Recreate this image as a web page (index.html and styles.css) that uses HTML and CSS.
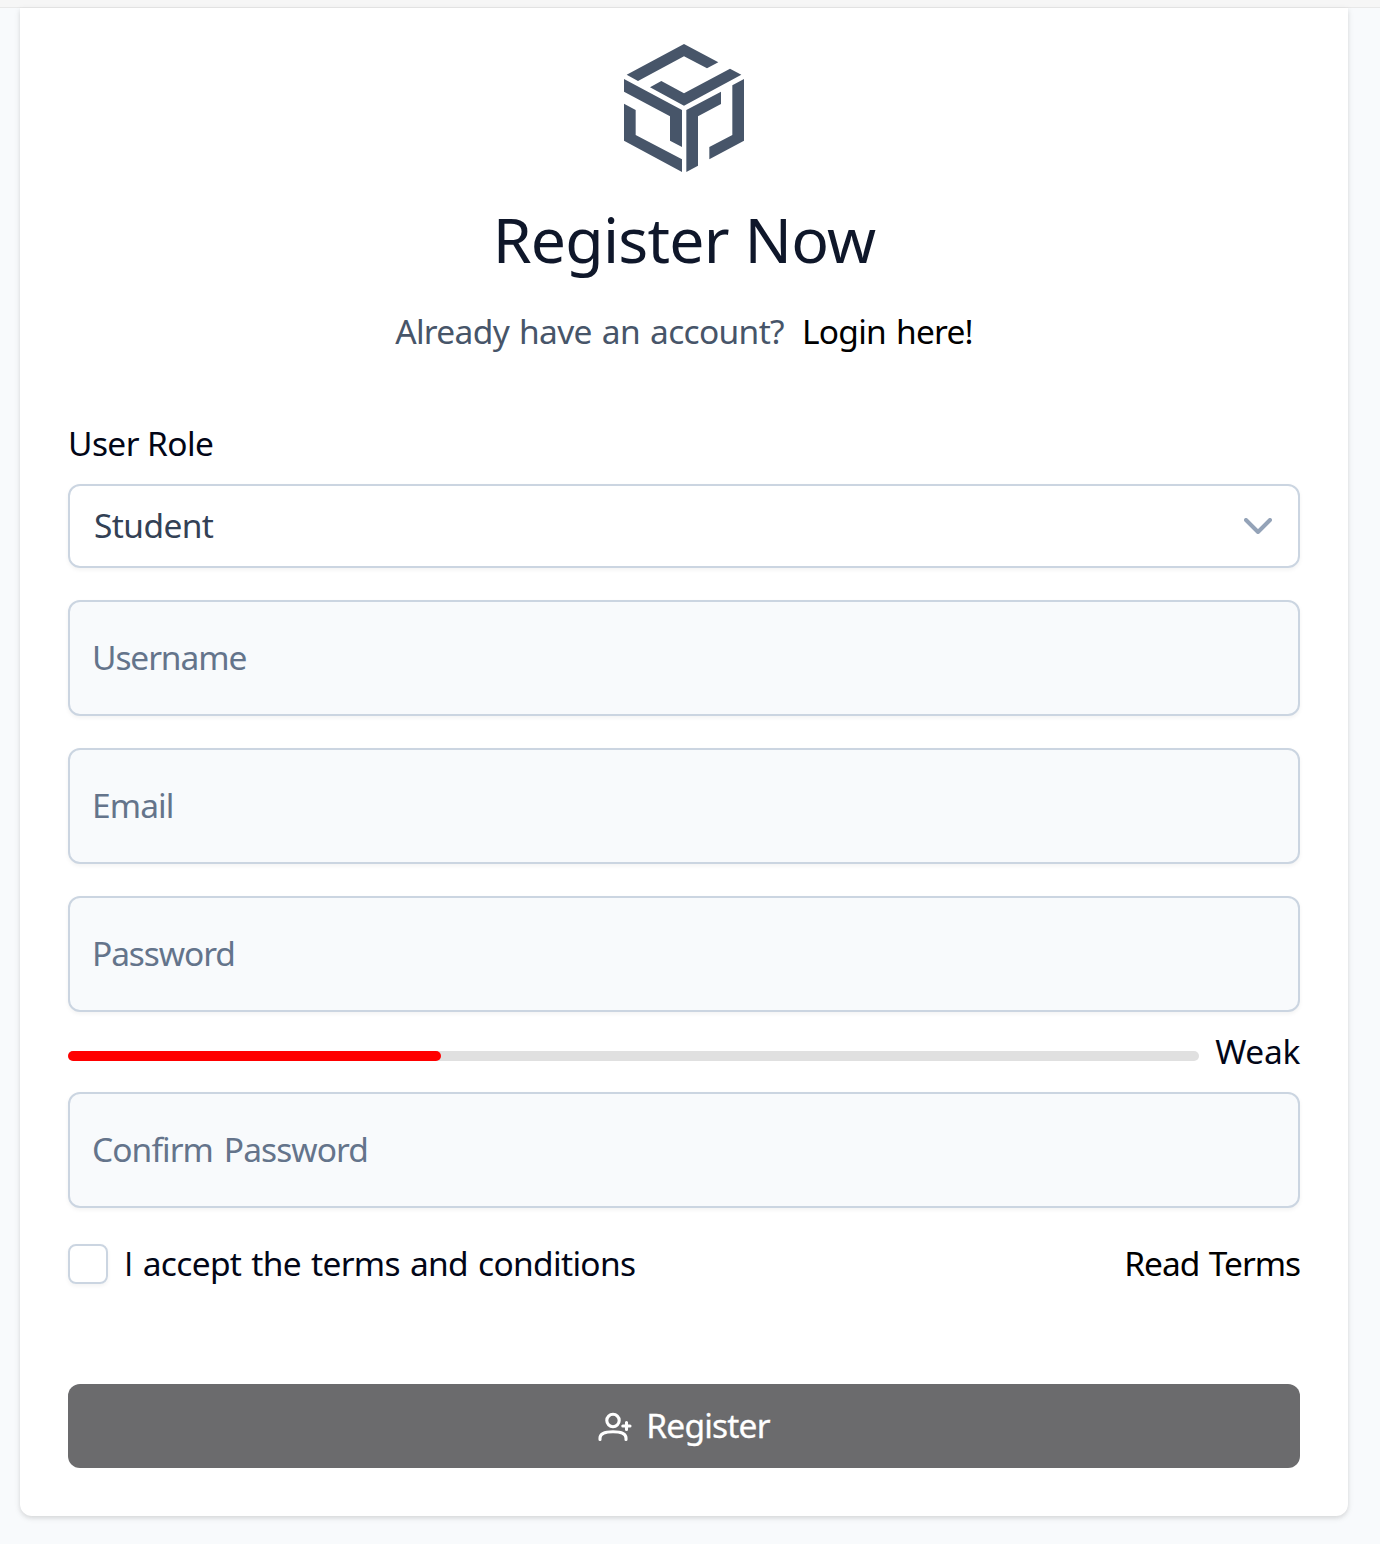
FILE: index.html
```html
<!DOCTYPE html>
<html lang="en">
<head>
<meta charset="utf-8">
<title>Register Now</title>
<link rel="stylesheet" href="styles.css">
</head>
<body>
<header class="topbar"></header>
<main class="card">
  <svg class="logo" viewBox="42 42 360 384" fill="currentColor" aria-hidden="true">
    <path d="M50 134 222 42 325 97 291 115 222 79 84 153Z"/>
    <path d="M120 172 154 153 222 190 360 116 394 134 222 227Z"/>
    <path d="M42 147 216 240V351L180 332V259L42 185Z"/>
    <path d="M42 221 77 240V315L216 388V426L42 332Z"/>
    <path d="M229 240 333 185V222L264 259V407L229 426Z"/>
    <path d="M367 166 402 147V332L298 388V351L367 315Z"/>
  </svg>
  <h1 class="title">Register Now</h1>
  <p class="subtitle"><span class="t-question">Already have an account?</span><a class="login">Login here!</a></p>
  <form class="form">
    <label class="label">User Role</label>
    <div class="select"><span>Student</span>
      <svg class="chevron" viewBox="0 0 28 16" aria-hidden="true"><path d="M2 2 14 14 26 2"/></svg>
    </div>
    <div class="field"><span class="t-username">Username</span></div>
    <div class="field"><span class="t-email">Email</span></div>
    <div class="field"><span class="t-password">Password</span></div>
    <div class="strength">
      <div class="track"><div class="meter"></div></div>
      <span class="t-weak">Weak</span>
    </div>
    <div class="field confirm"><span class="t-confirm">Confirm Password</span></div>
    <div class="terms">
      <span class="checkbox"></span>
      <span class="t-accept"><span class="plain-i">I</span> accept the terms and conditions</span>
      <a class="read">Read Terms</a>
    </div>
    <button class="submit" type="button">
      <svg class="user-plus" viewBox="0 0 34 30" aria-hidden="true">
        <circle cx="15" cy="8.500" r="6.200"/>
        <path d="M2 27.500V26C2 21.700 7 19.700 15 19.700S28 21.700 28 26V27.500M28.500 10.500V17.500M24.800 14H32"/>
      </svg>
      <span class="t-register">Register</span>
    </button>
  </form>
</main>
</body>
</html>
```

FILE: styles.css
```css
* { box-sizing: border-box; }
body {
  margin: 0;
  height: 1544px;
  overflow: hidden;
  background: #f8fafc;
  color: #020617;
  font: 33.5px/48px "Noto Sans", "Open Sans", sans-serif;
  letter-spacing: -.6px;
  white-space: nowrap;
}
.topbar { height: 8px; background: #f6f6f6; border-bottom: 1px solid #e8e8e8; }
.card {
  width: 1328px;
  height: 1508px;
  margin-left: 20px;
  padding: 36px 48px 48px;
  display: flex;
  flex-direction: column;
  align-items: center;
  background: #fff;
  border-radius: 0 0 12px 12px;
  box-shadow: 0 2px 6px rgba(0, 0, 0, .1), 0 2px 4px rgba(0, 0, 0, .06);
}
.logo { width: 120px; height: 128px; color: #475569; }
.title { margin: 27px 0 0; font-size: 62.5px; line-height: 80px; font-weight: 400; letter-spacing: -.75px; color: #0f172a; }
.subtitle { display: flex; gap: 18px; margin: 28px 0 0; color: #475569; }
.t-question { letter-spacing: -.67px; word-spacing: 2px; }
.login { letter-spacing: -.75px; word-spacing: 2px; color: #000; }
.form { width: 100%; display: flex; flex-direction: column; margin-top: 64px; }
.label { height: 65px; }
.select, .field {
  display: flex;
  align-items: center;
  justify-content: space-between;
  height: 84px;
  padding: 0 26px 0 24px;
  border: 2px solid #cbd5e1;
  border-radius: 12px;
  box-shadow: 0 2px 4px rgba(0, 0, 0, .05);
  color: #334155;
}
.select > span, .field > span, .t-weak, .t-accept, .read, .t-register { padding-bottom: 2px; }
.field { height: 116px; margin-top: 32px; padding-left: 22px; background: #f8fafc; color: #64748b; }
.t-username, .t-password { letter-spacing: -1.1px; }
.t-email { letter-spacing: -.9px; }
.t-confirm { letter-spacing: -.92px; word-spacing: 3px; }
.chevron { width: 28px; height: 16px; fill: none; stroke: #94a3b8; stroke-width: 4; stroke-linecap: round; stroke-linejoin: round; }
.strength { display: flex; align-items: center; justify-content: space-between; height: 80px; }
.t-weak { letter-spacing: -.3px; }
.track { width: 1131px; height: 10px; margin-top: 8px; border-radius: 5px; background: #e0e0e0; }
.meter { width: 33%; height: 10px; border-radius: 5px; background: #f00; }
.confirm { margin-top: 0; }
.terms { display: flex; align-items: center; height: 40px; margin-top: 36px; }
.checkbox { width: 40px; height: 40px; margin-right: 16px; border: 2px solid #cbd5e1; border-radius: 8px; box-shadow: 0 2px 4px rgba(0, 0, 0, .05); }
.t-accept { letter-spacing: -.67px; word-spacing: 2px; }
.plain-i { font-family: "Open Sans", sans-serif; }
.read { margin-left: auto; letter-spacing: -1.05px; word-spacing: 2px; color: #000; }
.submit {
  display: flex;
  align-items: center;
  justify-content: center;
  gap: 14px;
  height: 84px;
  margin-top: 100px;
  padding: 0;
  border: 0;
  border-radius: 12px;
  background: #6b6b6d;
  color: #fff;
  font: inherit;
}
.t-register { letter-spacing: -.8px; -webkit-text-stroke: .3px #fff; }
.user-plus { width: 34px; height: 30px; margin-top: 2px; fill: none; stroke: #fff; stroke-width: 3.1; stroke-linecap: round; stroke-linejoin: round; }
```
